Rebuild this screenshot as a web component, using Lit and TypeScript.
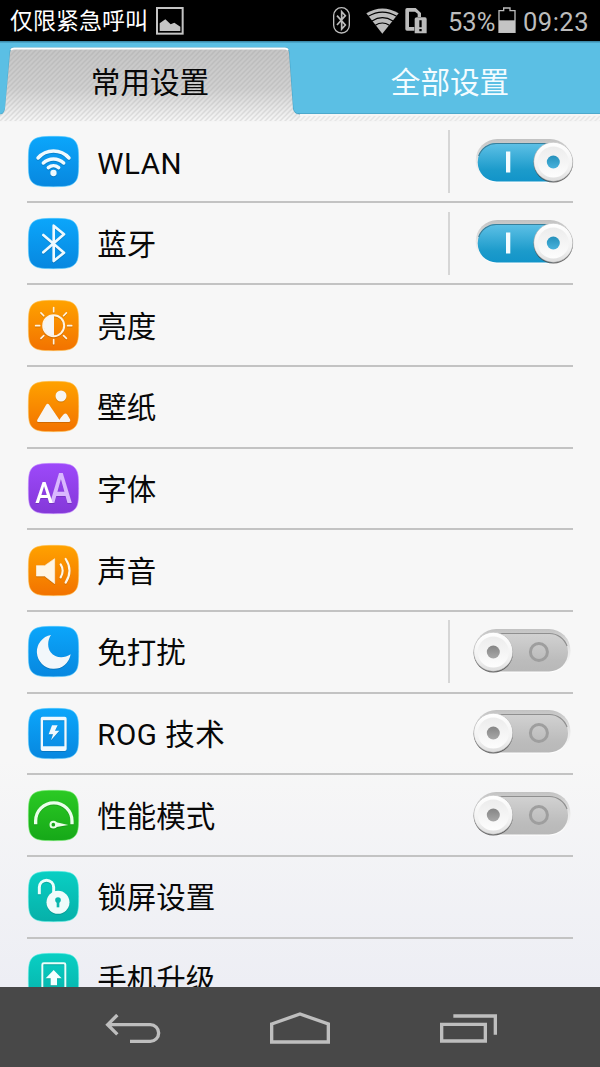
import { LitElement, html, svg, css, nothing } from "lit";
import { customElement, property } from "lit/decorators.js";

type Tone = "blue" | "orange" | "purple" | "green" | "teal";
const TONES: Record<Tone, [string, string, string]> = {
  blue: ["#0ba6fb", "#0787df", "#52c9ff"],
  orange: ["#ffa200", "#f27200", "#ffc04d"],
  purple: ["#9d49fa", "#8438d8", "#c58cff"],
  green: ["#2bca24", "#16a818", "#76ee70"],
  teal: ["#09cfc3", "#06b0a9", "#5cf0e6"],
};

const rays = [0, 45, 90, 135, 180, 225, 270, 315];
const GLYPHS: Record<string, unknown> = {
  wifi: svg`<g fill="none" stroke="#eefaff" stroke-width="10.500" stroke-linecap="round">
    <path d="M30 66A62 62 0 0 1 123 66M46 81A44 44 0 0 1 107 81M61 95A24 24 0 0 1 92 95"/></g><circle cx="76.500" cy="111" r="9.500" fill="#eefaff"/>`,
  bluetooth: svg`<path d="M46 51L108 104L77 129V23L108 49L46 103" fill="none" stroke="#eefaff" stroke-width="8" stroke-linecap="round" stroke-linejoin="round"/>`,
  brightness: svg`<g stroke="#fff3e0" fill="none"><circle cx="77" cy="77" r="31.500" stroke-width="6"/>
    ${rays.map((a) => svg`<path d="M77 35V23" stroke-width="5" stroke-linecap="round" transform="rotate(${a} 77 77)"/>`)}</g>
    <path d="M78 46A31 31 0 0 0 78 108Z" fill="#f5f5f5"/>`,
  wallpaper: svg`<circle cx="99" cy="45" r="16.500" fill="#f7f5f2"/><path d="M30 123Q25 122 28 116L54 72Q59 65 64 72L91 112Q95 120 97 112Q104 103 108 99Q113 95 118 101L126 115Q129 121 124 123Z" fill="#f7f5f2"/>`,
  font: svg`<g class="letters"><text x="65" y="120" font-size="128" textLength="67" lengthAdjust="spacingAndGlyphs" fill="#d9b8ff">A</text>
    <text x="22" y="120" font-size="86" textLength="53" lengthAdjust="spacingAndGlyphs" fill="#fff">A</text></g>`,
  sound: svg`<path d="M25 62H50L80 41V116L50 93H25Z" fill="#fff6e6" stroke="#fff6e6" stroke-width="2" stroke-linejoin="round"/>
    <path d="M98 58Q110 77 98 97M113 42Q136 77 113 113" fill="none" stroke="#fff6e6" stroke-width="6.500" stroke-linecap="round"/>`,
  moon: svg`<path d="M69 27A51 51 0 1 0 128 85C108 98 82 97 68 79C58 65 58 44 69 27Z" fill="#f2f7fb"/>`,
  rog: svg`<path fill-rule="evenodd" d="M44 26H110Q116 26 116 32V123Q116 129 110 129H44Q38 129 38 123V32Q38 26 44 26ZM45 37V115H109V37Z" fill="#eef9ff"/>
    <path d="M72 52H89L81 68H94L69 97L75 79H62Z" fill="#eef9ff"/>`,
  gauge: svg`<path d="M23 103V93A54 54 0 0 1 132 93V103" fill="none" stroke="#eaffea" stroke-width="10"/>
    <path d="M82 96L121 105L82 112Z" fill="#eaffea"/><circle cx="76" cy="104" r="8.500" fill="#18a51b" stroke="#eaffea" stroke-width="6"/>`,
  lock: svg`<path d="M34 70V49A21.500 21.500 0 0 1 77 49V66" fill="none" stroke="#eafffc" stroke-width="9"/>
    <circle cx="90" cy="94" r="34.500" fill="#effcfb"/><circle cx="90" cy="87" r="8.500" fill="#09b7ae"/><path d="M86 88H94V109H86Z" fill="#09b7ae"/>`,
  upgrade: svg`<rect x="43" y="31" width="69" height="100" rx="4" fill="none" stroke="#eafffc" stroke-width="6"/>
    <path d="M77 51L101 76H87V97H68V76H53Z" fill="#f5ffff"/>`,
};

@customElement("app-icon")
export class AppIcon extends LitElement {
  static styles = css`
    :host { display: block; width: 51px; height: 51px; }
    .icon { display: block; overflow: visible; }
    .glyph { filter: drop-shadow(0 2px 1px rgba(0, 0, 0, 0.22)); }
    .letters { font-family: Roboto, sans-serif; font-weight: 500; }
  `;
  @property() name = "wifi";
  @property() tone: Tone = "blue";
  render() {
    const [top, bottom, rim] = TONES[this.tone];
    return html`<svg class="icon" width="51" height="51" viewBox="0 0 153 153">
      <defs><linearGradient id="g" x2="0" y2="1"><stop stop-color=${top} /><stop offset="1" stop-color=${bottom} /></linearGradient></defs>
      <path d="M76 1C118 1 130 4 140 14C150 25 152 38 152 76C152 117 150 129 140 139C129 150 117 152 76 152C37 152 24 150 13 139C3 129 1 117 1 76C1 38 3 25 13 14C24 4 37 1 76 1Z" fill="url(#g)" stroke=${rim} stroke-opacity=".7" stroke-width="2.500" />
      <g class="glyph">${GLYPHS[this.name]}</g>
    </svg>`;
  }
}

@customElement("app-switch")
export class AppSwitch extends LitElement {
  static styles = css`
    :host { display: block; width: 110px; height: 56px; }
    .switch { display: block; }
  `;
  @property({ type: Boolean }) on = false;
  render() {
    const on = this.on;
    const x = on ? 8.7 : 6.5;
    const knob = on ? 84.3 : 24.3;
    return html`<svg class="switch" width="110" height="56" viewBox="0 0 110 56">
      <defs>
        <linearGradient id="t" x2="0" y2="1">
          <stop stop-color=${on ? "#5fc1e6" : "#d2d2d2"} /><stop offset=".7" stop-color=${on ? "#1c9bcb" : "#bcbcbc"} /><stop offset="1" stop-color=${on ? "#1294c9" : "#b8b8b8"} />
        </linearGradient>
        <linearGradient id="s" x2="0" y2="1"><stop stop-color="#c2c2c2" /><stop offset=".5" stop-color="#e8e8e8" /><stop offset="1" stop-color="#fff" /></linearGradient>
        <linearGradient id="k" x2="0" y2="1"><stop stop-color="#fff" /><stop offset=".7" stop-color="#f0f0f0" /><stop offset="1" stop-color="#ddd" /></linearGradient>
        <linearGradient id="f" x2="0" y2="1"><stop stop-color="#ececec" /><stop offset="1" stop-color="#fdfdfd" /></linearGradient>
        <linearGradient id="d" x2="0" y2="1"><stop stop-color=${on ? "#2590bb" : "#858585"} /><stop offset="1" stop-color=${on ? "#49b2dc" : "#a8a8a8"} /></linearGradient>
      </defs>
      <rect x=${on ? 6.7 : 5.5} y="5" width="96" height="43.500" rx="21.500" fill="url(#s)" />
      <rect x=${x} y="9" width="92.500" height="38.500" rx="19" fill="url(#t)" />
      <path d="M${x + 1} 22A18.500 18.500 0 0 1 ${x + 19} 9.500H${x + 74}A18.500 18.500 0 0 1 ${x + 91.5} 22" fill="none" stroke=${on ? "#387f9b" : "#8f8f8f"} stroke-width="1.200" />
      ${on
        ? svg`<rect x="37" y="17.500" width="4.300" height="21" fill="#f4fcff"/>`
        : svg`<circle cx="69.900" cy="28" r="8.500" fill="none" stroke="#9e9e9e" stroke-width="3"/>`}
      <circle cx=${knob} cy="28.700" r="19.700" fill="#3e3e3e" opacity=".8" />
      <circle cx=${knob} cy="27.800" r="19.500" fill="url(#k)" stroke="#b5b5b5" stroke-width=".5" />
      <circle cx=${knob} cy="28" r="15.500" fill="url(#f)" />
      <circle cx=${knob} cy="28" r="6.500" fill="url(#d)" />
    </svg>`;
  }
}

interface Row { label: string; icon: string; tone: Tone; on?: boolean; divided?: boolean }
const ROWS: Row[] = [
  { label: "WLAN", icon: "wifi", tone: "blue", on: true, divided: true },
  { label: "蓝牙", icon: "bluetooth", tone: "blue", on: true, divided: true },
  { label: "亮度", icon: "brightness", tone: "orange" },
  { label: "壁纸", icon: "wallpaper", tone: "orange" },
  { label: "字体", icon: "font", tone: "purple" },
  { label: "声音", icon: "sound", tone: "orange" },
  { label: "免打扰", icon: "moon", tone: "blue", on: false, divided: true },
  { label: "ROG 技术", icon: "rog", tone: "blue", on: false },
  { label: "性能模式", icon: "gauge", tone: "green", on: false },
  { label: "锁屏设置", icon: "lock", tone: "teal" },
  { label: "手机升级", icon: "upgrade", tone: "teal" },
];

@customElement("app-root")
export class AppRoot extends LitElement {
  static styles = css`
    :host {
      display: flex; flex-direction: column; width: 600px; height: 1067px; overflow: hidden;
      font-family: Roboto, "Noto Sans CJK SC", sans-serif; color: #080808;
      background: linear-gradient(#f7f7f7 0, #f7f7f7 760px, #edeef4 985px);
    }
    svg { display: block; flex: none; }
    .status { display: flex; align-items: center; flex: none; height: 41px; box-sizing: border-box; padding: 0 10px 0 10px; background: #000; color: #bcbcbc; }
    .carrier { font-size: 23px; line-height: 41px; padding-top: 1px; color: #fff; width: 146px; white-space: nowrap; }
    .push { margin-left: auto; }
    .wifi { margin-left: 16px; }
    .sim { margin-left: 6px; }
    .percent { width: 50px; margin-left: 21px; }
    .clock { width: 67px; margin-left: 7px; }
    .num { font-size: 25.5px; line-height: 45px; padding-top: 3px; box-sizing: border-box; white-space: nowrap; letter-spacing: 0.5px; }
    .percent.num { letter-spacing: 0; }
    .tabs { position: relative; display: grid; grid-template-columns: 300px 300px; flex: none; height: 80.8px; background: #5bbfe4; }
    .tabart { position: absolute; left: 0; top: 0; }
    .tab { position: relative; text-align: center; font-size: 29.6px; line-height: 84px; }
    .other { color: #f4fcff; }
    .list { flex: 1; min-height: 0; overflow: hidden; padding: 0 27px; }
    .row { display: flex; align-items: center; height: 81.7px; box-sizing: border-box; border-bottom: 2px solid #c3c3c3; padding-left: 1px; }
    .label { flex: 1; margin-left: 18.3px; padding-top: 3px; font-size: 29.5px; line-height: 40px; white-space: nowrap; }
    .latin { letter-spacing: 0.5px; padding-top: 4px; }
    .rule { width: 2px; height: 63px; background: #d6d6d6; margin-right: 19px; }
    .toggle { margin-right: -6px; }
    .nav { display: flex; align-items: center; justify-content: space-between; flex: none; height: 80px; box-sizing: border-box; padding: 3px 103px 0 105px; background: #484848; }
    .home { margin-right: 2px; margin-bottom: 2px; }
  `;

  render() {
    return html`
      <div class="status">
        <span class="carrier">仅限紧急呼叫</span>
        <svg width="28" height="28" viewBox="0 0 84 84"><rect x="3" y="3" width="77" height="77" fill="none" stroke="#c4c4c4" stroke-width="6" /><path d="M11 72V49L28 37L44 52L55 47L73 59V72Z" fill="#c4c4c4" /></svg>
        <svg class="push" width="17" height="27" viewBox="0 0 51 81"><rect x="2" y="2" width="47" height="76" rx="23" fill="none" stroke="#bcbcbc" stroke-width="4" /><path d="M12 26L37 54L26 66V14L37 26L12 54" fill="none" stroke="#bcbcbc" stroke-width="5" /></svg>
        <svg class="wifi" width="33" height="26" viewBox="0 0 99 78"><path d="M1 16Q49 -13 98 16L49 77Z" fill="#bcbcbc" /><path d="M7 25Q49 0 92 25M18 39Q49 19 81 39M28 52Q49 38 70 52" fill="none" stroke="#000" stroke-width="3.500" /></svg>
        <svg class="sim" width="22" height="27" viewBox="0 0 66 81"><path d="M6 3H32L48 18V30H38V20L30 14H12V60H28V71H6Q1 71 1 66V8Q1 3 6 3Z" fill="#bcbcbc" /><path d="M36 31H60Q65 31 65 36V79H29V36Q29 31 36 31Z" fill="#bcbcbc" /><path d="M43 40H50V61H43ZM43 66H50V73H43Z" fill="#000" /></svg>
        <span class="num percent">53%</span>
        <svg width="18" height="27" viewBox="0 0 54 81"><path d="M17 11V3H36V11H51V76H3V11Z" fill="none" stroke="#bcbcbc" stroke-width="4" /><path d="M3 40H51V76H3Z" fill="#c4c4c4" /></svg>
        <span class="num clock">09:23</span>
      </div>
      <div class="tabs">
        <svg class="tabart" width="600" height="81" viewBox="0 0 600 81">
          <defs>
            <linearGradient id="tab" x2="0" y2="1"><stop stop-color="#c5c5c5" /><stop offset=".55" stop-color="#d0d0d0" /><stop offset=".85" stop-color="#e9e9e9" /><stop offset="1" stop-color="#f6f6f6" /></linearGradient>
            <pattern id="weave" width="5" height="5" patternUnits="userSpaceOnUse"><path d="M-1 6L6 -1M-1 1L1 -1M4 6L6 4" stroke="#8d8d8d" stroke-opacity=".2" stroke-width="1.500" /></pattern>
          </defs>
          <rect width="600" height="1.500" fill="#3d8bab" />
          <rect y="73" width="600" height="8" fill="#f5f5f5" />
          <rect y="75" width="600" height="5" fill="url(#weave)" opacity=".7" />
          <rect x="298" y="72" width="302" height="1" fill="#4da9cc" />
          <path d="M0 74Q4 73 5 68L9.500 12Q10 7 14 7H285Q289 7 289.500 12L293.500 68Q294 73 300 74V81H0Z" fill="#2a7795" opacity=".35" transform="translate(0 -1)" />
          <path d="M0 74Q4 73 5 68L10 12Q10.500 7 14 7H285Q288.500 7 289 12L293 68Q294 73 300 74V80H0Z" fill="url(#tab)" />
          <path d="M0 74Q4 73 5 68L10 12Q10.500 7 14 7H285Q288.500 7 289 12L293 68Q294 73 300 74V80H0Z" fill="url(#weave)" />
          <path d="M11 9Q12 7.500 14 7.500H285Q287 7.500 288 9" fill="none" stroke="#fff" stroke-width="2" />
        </svg>
        <div class="tab">常用设置</div>
        <div class="tab other">全部设置</div>
      </div>
      <div class="list">
        ${ROWS.map((r) => html`<div class="row">
          <app-icon name=${r.icon} tone=${r.tone}></app-icon>
          <span class="label ${/^[A-Z]/.test(r.label) ? "latin" : ""}">${r.label}</span>
          ${r.divided ? html`<div class="rule"></div>` : nothing}
          ${r.on === undefined ? nothing : html`<app-switch class="toggle" ?on=${r.on}></app-switch>`}
        </div>`)}
      </div>
      <div class="nav">
        <svg width="56" height="30" viewBox="0 0 168 90"><path d="M37 3L8 32L37 61M8 32H136A25 25 0 0 1 136 82H75" fill="none" stroke="#bebebe" stroke-width="10" /></svg>
        <svg class="home" width="60" height="32" viewBox="0 0 180 96"><path d="M5 36L90 6L175 36V90H5Z" fill="none" stroke="#bebebe" stroke-width="10" /></svg>
        <svg width="57" height="29" viewBox="0 0 171 87"><path d="M5 31H136V81H5ZM40 6H166V62" fill="none" stroke="#bebebe" stroke-width="10" /></svg>
      </div>`;
  }
}
